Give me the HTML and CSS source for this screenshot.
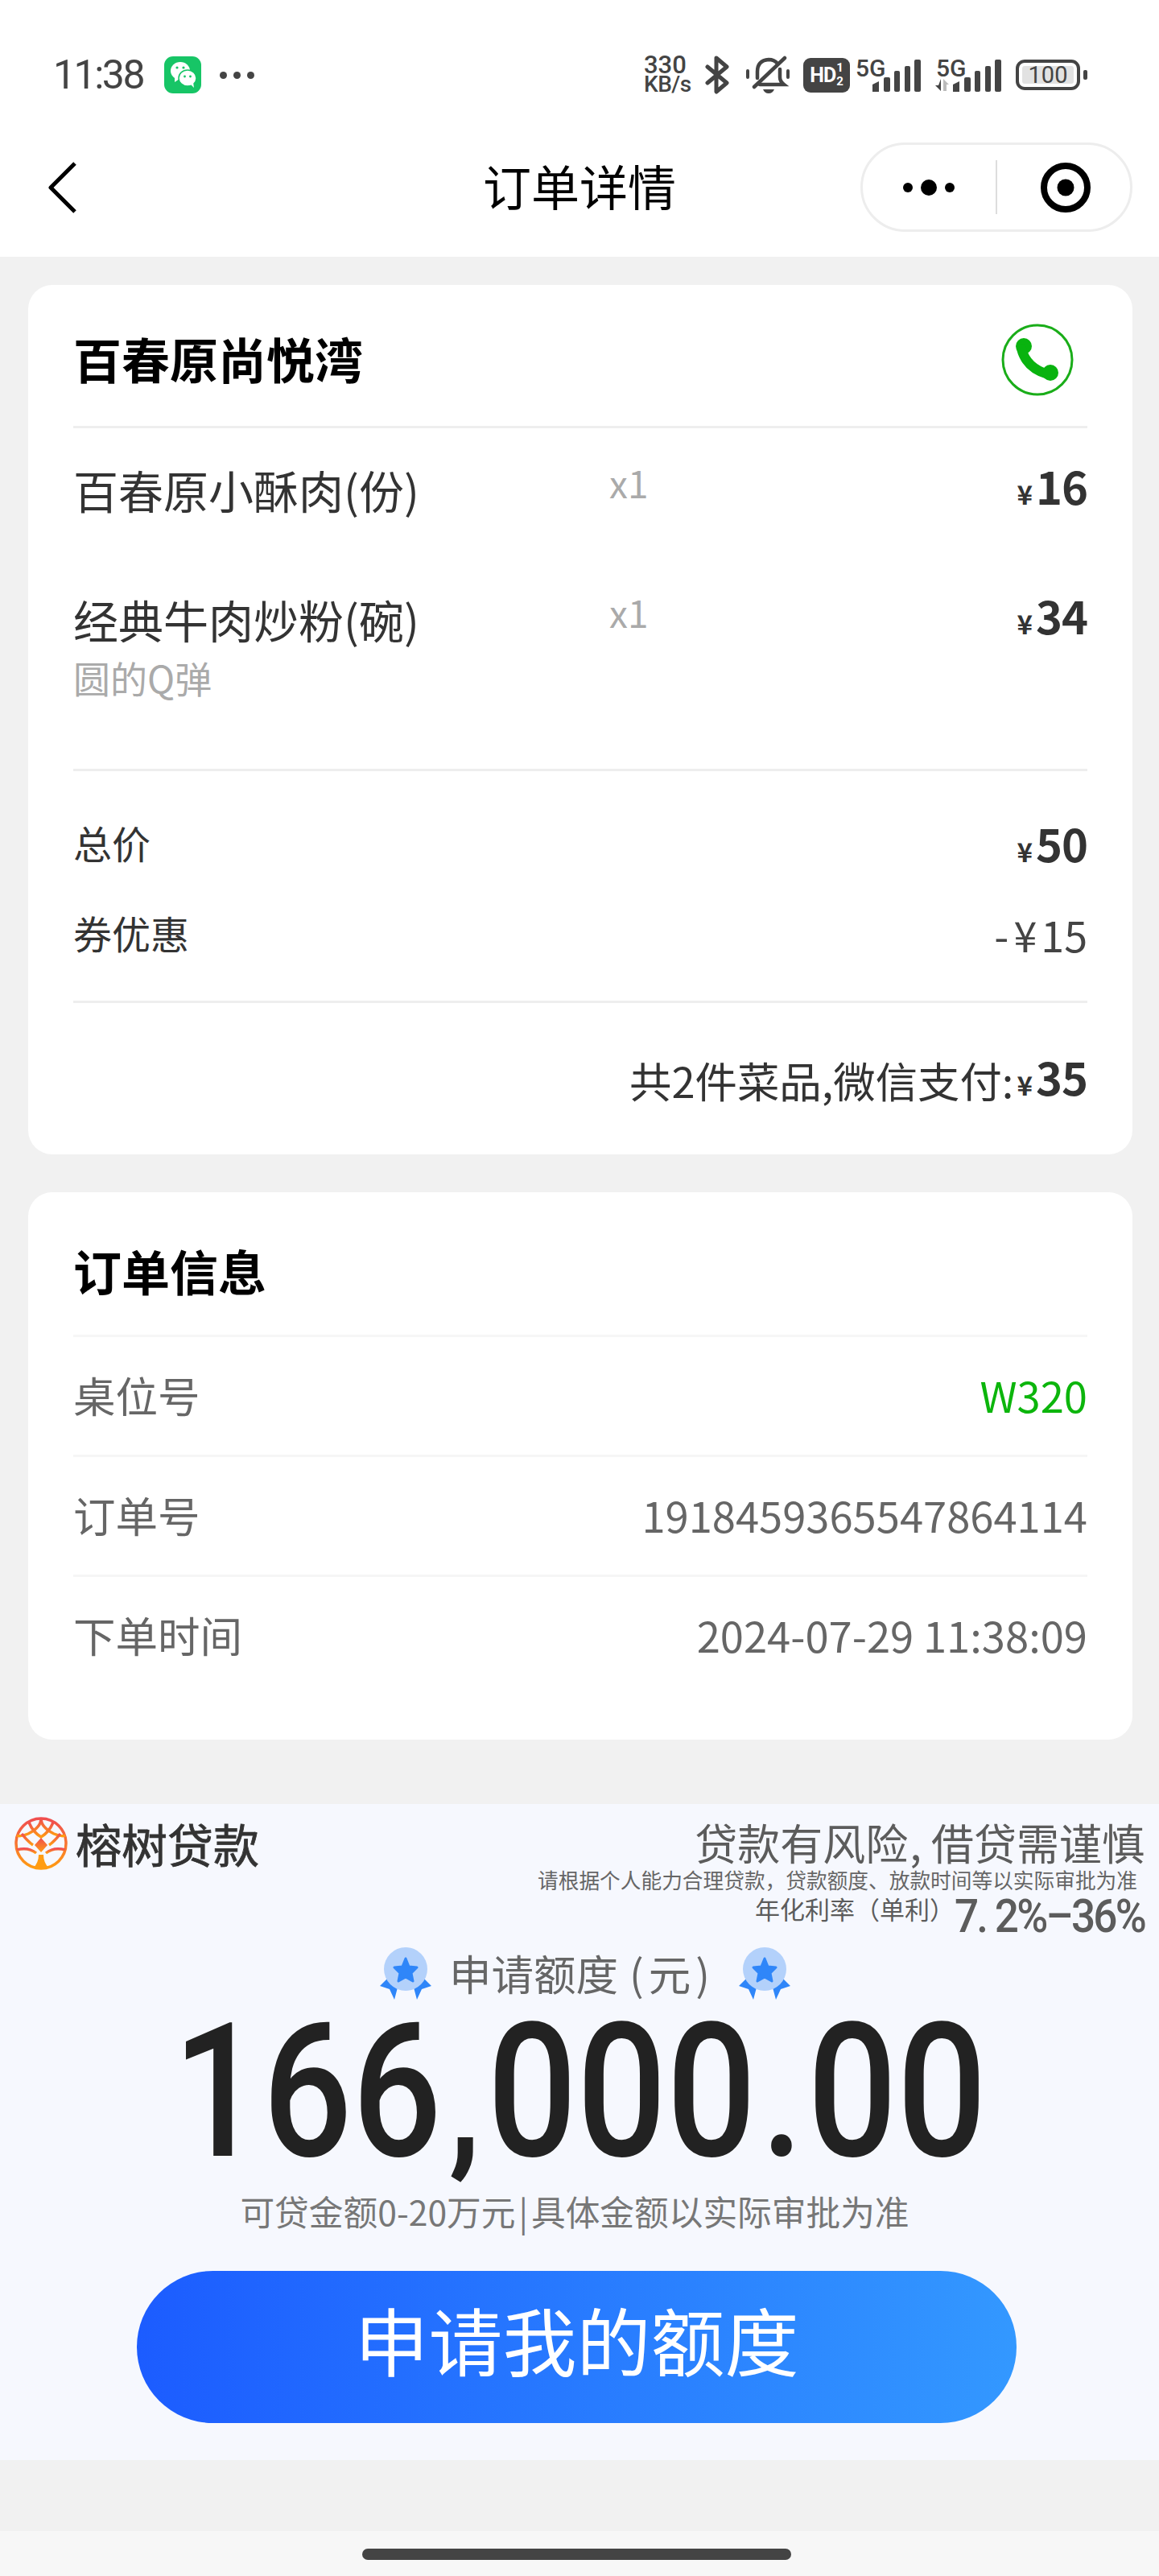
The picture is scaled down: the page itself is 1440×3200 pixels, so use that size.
FILE: index.html
```html
<!DOCTYPE html>
<html lang="zh-CN">
<head>
  <meta charset="UTF-8" />
  <title>订单详情</title>
  <link rel="stylesheet" href="styles.css">
</head>
<body>

  <!-- Status bar + nav -->
  <header class="top">
    <div class="statusbar">
      <div class="status-left">
        <span class="time">11:38</span>
        <svg class="wechat" width="46" height="46" viewBox="0 0 46 46">
          <rect width="46" height="46" rx="11" fill="#17c566"/>
          <ellipse cx="20" cy="18" rx="12" ry="11" fill="#fff"/>
          <polygon points="13,26 13,32 19,28" fill="#fff"/>
          <ellipse cx="29" cy="27" rx="11" ry="10" stroke="#17c566" stroke-width="1.5" fill="#fff"/>
          <polygon points="33,35 37,39 36,32" fill="#fff"/>
          <circle cx="16" cy="14" r="1.6" fill="#17c566"/>
          <circle cx="24" cy="14" r="1.6" fill="#17c566"/>
          <circle cx="25.500" cy="25" r="1.400" fill="#17c566"/>
          <circle cx="32.500" cy="25" r="1.400" fill="#17c566"/>
        </svg>
        <span class="more-dots"><i></i><i></i><i></i></span>
      </div>
      <div class="status-right">
        <div class="speed"><b>330</b><b class="speed-unit">KB/s</b></div>
        <svg class="st-bt" width="30" height="48" viewBox="0 0 30 48" fill="none" stroke="#444" stroke-width="5" stroke-linejoin="round" stroke-linecap="round">
          <path d="M3 14 L27 34 L14 45 V3 L27 14 L3 34"/>
        </svg>
        <svg class="st-bell" width="56" height="48" viewBox="0 0 56 48" fill="none" stroke="#444" stroke-width="4.500" stroke-linecap="round">
          <path d="M15 28 V20 Q15 6 29 5 Q36 5 40 10"/>
          <path d="M43 17 V27 Q43 32 48 36 H18"/>
          <path d="M11 39 L49 3"/>
          <path d="M22 42 H36 Q34 47 29 47 Q24 47 22 42Z" fill="#444" stroke="none"/>
          <rect x="1" y="17" width="4" height="12" fill="#444" stroke="none" rx="2"/>
          <rect x="51" y="17" width="4" height="12" fill="#444" stroke="none" rx="2"/>
        </svg>
        <div class="st-hd">
          <span class="hd-main">HD</span>
          <span class="hd-frac"><span>1</span><span>2</span></span>
        </div>
        <svg class="st-signal" width="81" height="50" viewBox="0 -6 81 50">
          <text x="0" y="24" class="sig-text">5G</text>
          <path d="M21 34 L29 30 V43 H21Z" fill="#444"/>
          <rect x="35" y="25" width="8" height="18" rx="2" fill="#444"/>
          <rect x="48" y="17" width="7" height="26" rx="2" fill="#444"/>
          <rect x="61" y="11" width="7" height="32" rx="2" fill="#444"/>
          <rect x="73" y="3" width="8" height="40" rx="2" fill="#444"/>
        </svg>
        <svg class="st-signal2" width="83" height="50" viewBox="0 -6 83 50">
          <text x="2" y="24" class="sig-text">5G</text>
          <path d="M8 27 V42 L1 35 H5Z" fill="#444"/>
          <path d="M11 42 V27 L18 34 H15 V42Z" fill="#bbb"/>
          <path d="M23 34 L31 30 V43 H23Z" fill="#444"/>
          <rect x="37" y="25" width="8" height="18" rx="2" fill="#444"/>
          <rect x="50" y="17" width="7" height="26" rx="2" fill="#444"/>
          <rect x="63" y="11" width="7" height="32" rx="2" fill="#444"/>
          <rect x="75" y="3" width="8" height="40" rx="2" fill="#444"/>
        </svg>
        <div class="st-battery">
          <div class="battery-body"><span class="battery-level">100</span></div>
          <i class="battery-nub"></i>
        </div>
      </div>
    </div>

    <nav class="navbar">
      <svg class="back" width="36" height="64" viewBox="0 0 36 64" fill="none" stroke="#000" stroke-width="5">
        <path d="M34 2 L4 32 L34 62" stroke-linejoin="round"/>
      </svg>
      <h1 class="nav-title">订单详情</h1>
      <div class="capsule">
        <div class="capsule-more"><i></i><i class="big"></i><i></i></div>
        <div class="capsule-line"></div>
        <div class="capsule-close">
          <svg width="62" height="62" viewBox="0 0 62 62">
            <circle cx="31" cy="31" r="27" fill="none" stroke="#000" stroke-width="8"/>
            <circle cx="31" cy="31" r="10.500" fill="#000"/>
          </svg>
        </div>
      </div>
    </nav>
  </header>

  <main class="page">
    <!-- Order card -->
    <section class="card">
      <div class="shop-head">
        <h2 class="card-title">百春原尚悦湾</h2>
        <svg class="phone" width="90" height="90" viewBox="0 0 90 90">
          <circle cx="45" cy="45" r="43" fill="none" stroke="#1aad19" stroke-width="3"/>
          <circle cx="28" cy="28" r="10" fill="#09b30f"/>
          <circle cx="61" cy="61" r="10" fill="#09b30f"/>
          <path d="M25 31 Q31 55 58 63" fill="none" stroke="#09b30f" stroke-width="12" stroke-linecap="round"/>
        </svg>
      </div>

      <div class="items">
        <div class="item">
          <div class="item-main"><div class="item-name">百春原小酥肉(份)</div></div>
          <div class="item-qty">x1</div>
          <div class="item-price"><small>¥</small>16</div>
        </div>
        <div class="item">
          <div class="item-main">
            <div class="item-name">经典牛肉炒粉(碗)</div>
            <div class="item-note">圆的Q弹</div>
          </div>
          <div class="item-qty">x1</div>
          <div class="item-price"><small>¥</small>34</div>
        </div>
      </div>

      <div class="totals">
        <div class="total-row">
          <span class="total-label">总价</span>
          <span class="item-price total-price"><small>¥</small>50</span>
        </div>
        <div class="total-row">
          <span class="total-label">券优惠</span>
          <span class="discount">-<span class="discount-yen">¥</span>15</span>
        </div>
      </div>

      <div class="pay-line">共2件菜品,微信支付:<span class="item-price pay-price"><small>¥</small>35</span></div>
    </section>

    <!-- Order info -->
    <section class="card card-info">
      <div class="info-head">
        <h2 class="card-title">订单信息</h2>
      </div>
      <div class="info-row"><span>桌位号</span><span class="green">W320</span></div>
      <div class="info-row"><span>订单号</span><span>1918459365547864114</span></div>
      <div class="info-row"><span>下单时间</span><span>2024-07-29 11:38:09</span></div>
    </section>
  </main>

  <!-- Loan ad -->
  <section class="ad">
    <div class="ad-top">
      <div class="ad-brand">
        <svg width="68" height="68" viewBox="0 0 68 68" fill="none">
          <defs>
            <linearGradient id="logoGrad" x1="0" y1="0" x2="0" y2="1">
              <stop offset="0" stop-color="#f04e50"/>
              <stop offset="1" stop-color="#ff9c12"/>
            </linearGradient>
          </defs>
          <g stroke="url(#logoGrad)" stroke-width="3.500">
            <circle cx="34" cy="34" r="31"/>
            <path d="M34 3 Q34 14 18 22 Q8 26 4 24"/>
            <path d="M34 3 Q34 14 50 22 Q60 26 64 24"/>
            <path d="M19 8 Q24 20 34 26 Q44 20 49 8"/>
            <path d="M4 42 Q18 38 28 46"/>
            <path d="M64 42 Q50 38 40 46"/>
            <path d="M10 22 Q18 32 24 36"/>
            <path d="M58 22 Q50 32 44 36"/>
          </g>
          <path d="M34 27 L42 36 L34 45 L26 36Z" fill="url(#logoGrad)"/>
          <path d="M31 48 H37 Q37 58 44 65 H24 Q31 58 31 48Z" fill="#ff9c12"/>
        </svg>
        <span class="brand-name">榕树贷款</span>
      </div>
      <div class="ad-legal">
        <div class="risk">贷款有风险<span class="risk-comma">,</span>借贷需谨慎</div>
        <div class="legal-note">请根据个人能力合理贷款，贷款额度、放款时间等以实际审批为准</div>
        <div class="rate"><span class="rate-label">年化利率（单利）</span><b>7. 2%–36%</b></div>
      </div>
    </div>

    <div class="apply-label">
      <svg class="medal-left" width="64" height="66" viewBox="0 0 64 66">
        <path d="M0 48 L12 36 L22 50 L18 65 L12 52Z" fill="#2f86f9"/>
        <path d="M64 48 L52 36 L42 50 L46 65 L52 52Z" fill="#2f86f9"/>
        <circle cx="32" cy="27" r="27" fill="#b3d1fb"/>
        <polygon points="32,14 36,24 46,25 39,32 41,42 32,37 23,42 25,32 18,25 28,24" fill="#2f86f9" stroke="#2f86f9" stroke-width="3" stroke-linejoin="round"/>
      </svg>
      <span class="apply-text">申请额度<span class="apply-unit">(元)</span></span>
      <svg class="medal-right" width="64" height="66" viewBox="0 0 64 66">
        <path d="M0 48 L12 36 L22 50 L18 65 L12 52Z" fill="#2f86f9"/>
        <path d="M64 48 L52 36 L42 50 L46 65 L52 52Z" fill="#2f86f9"/>
        <circle cx="32" cy="27" r="27" fill="#b3d1fb"/>
        <polygon points="32,14 36,24 46,25 39,32 41,42 32,37 23,42 25,32 18,25 28,24" fill="#2f86f9" stroke="#2f86f9" stroke-width="3" stroke-linejoin="round"/>
      </svg>
    </div>

    <div class="amount"><span class="amount-num">166<i>,</i>000<i>.</i>00</span></div>
    <div class="amount-note">可贷金额0-20万元<span class="note-bar">|</span>具体金额以实际审批为准</div>
    <button class="apply-btn"><span>申请我的额度</span></button>
  </section>

  <div class="gap"></div>
  <footer class="homebar"><i></i></footer>

</body>
</html>
```

FILE: styles.css
```css
/* Base */
* { box-sizing: border-box; }

body {
  margin: 0;
  width: 1440px;
  height: 3200px;
  overflow: hidden;
  background: #f1f1f1;
  font-family: "Noto Sans CJK SC", "Noto Sans", sans-serif;
  color: #333;
}

h1, h2 { margin: 0; font-weight: 400; }

/* Status bar */
.top { background: #fff; height: 319px; }

.statusbar {
  height: 166px;
  padding: 20px 89px 0 66px;
  display: flex;
  align-items: center;
  justify-content: space-between;
}

.status-left { display: flex; align-items: center; }

.time {
  font-family: Roboto, sans-serif;
  font-size: 50px;
  color: #444;
  letter-spacing: -2.500px;
  width: 138px;
}

.more-dots { display: flex; gap: 8px; margin-left: 23px; }
.more-dots i { width: 9px; height: 9px; border-radius: 50%; background: #444; }

.status-right { display: flex; align-items: center; }

.speed {
  width: 61px;
  display: flex;
  flex-direction: column;
  font-family: Roboto, sans-serif;
  color: #444;
  font-size: 31px;
  line-height: 24px;
}
.speed b { font-weight: 500; }
.speed-unit { font-size: 28px; letter-spacing: -.5px; white-space: nowrap; }

.st-bt { margin-left: 15px; }
.st-bell { margin-left: 20px; }

.st-hd {
  margin-left: 16px;
  width: 58px;
  height: 43px;
  border-radius: 9px;
  background: #444;
  color: #fff;
  display: flex;
  align-items: center;
  justify-content: center;
  font-family: Roboto, sans-serif;
  font-weight: 700;
}
.hd-main { font-size: 25px; letter-spacing: -1px; }
.hd-frac {
  display: flex;
  flex-direction: column;
  font-size: 15px;
  line-height: 17px;
  margin-left: 1px;
}

.st-signal { margin: -6px 0 0 7px; }
.st-signal2 { margin: -6px 0 0 17px; }
.sig-text {
  font-family: Roboto, sans-serif;
  font-size: 30px;
  font-weight: 500;
  fill: #444;
}

.st-battery { margin-left: 18px; display: flex; align-items: center; }
.battery-body {
  width: 80px;
  height: 38px;
  border: 4px solid #444;
  border-radius: 11px;
  padding: 4px;
  display: flex;
}
.battery-level {
  flex: 1;
  background: #e2e2e2;
  border-radius: 3px;
  font-family: Roboto, sans-serif;
  font-size: 29px;
  line-height: 22px;
  text-align: center;
  color: #444;
}
.battery-nub {
  width: 5px;
  height: 12px;
  margin-left: 4px;
  border-radius: 2px;
  background: #444;
}

/* Nav */
.navbar {
  height: 133px;
  padding: 0 33px;
  display: grid;
  grid-template-columns: minmax(0, 1fr) auto minmax(0, 1fr);
  align-items: center;
}
.back { display: block; margin-left: 26px; }
.nav-title { font-size: 60px; line-height: 80px; color: #000; padding-bottom: 6px; }

.capsule {
  justify-self: end;
  width: 338px;
  height: 111px;
  border: 3px solid #ededed;
  border-radius: 56px;
  display: flex;
  align-items: center;
}
.capsule-more {
  width: 165px;
  display: flex;
  align-items: center;
  justify-content: center;
  gap: 10px;
  padding-right: 2px;
}
.capsule-more i { width: 12px; height: 12px; border-radius: 50%; background: #000; }
.capsule-more i.big { width: 20px; height: 20px; }
.capsule-line { width: 2px; height: 67px; background: #ddd; }
.capsule-close { flex: 1; display: flex; justify-content: center; padding-left: 4px; }
.capsule-close svg { display: block; }

/* Cards */
.page { padding: 35px 33px 0 35px; }

.card {
  background: #fff;
  border-radius: 30px;
  padding: 0 56px;
  height: 1080px;
}

.card-title { font-size: 60px; font-weight: 700; color: #000; line-height: 80px; }

.shop-head {
  padding: 48px 17px 37px 0;
  display: flex;
  align-items: center;
  justify-content: space-between;
  border-bottom: 3px solid #eee;
}
.shop-head .card-title { padding-bottom: 4px; }
.phone { display: block; }

.items { padding: 36px 0 84px; border-bottom: 3px solid #eee; }
.item { display: flex; align-items: flex-start; }
.item + .item { margin-top: 81px; }
.item-main { width: 666px; }
.item-name { font-size: 56px; line-height: 80px; color: #333; }
.item-note { font-size: 46px; line-height: 60px; margin-top: 2px; color: #aaa; }
.item-qty { flex: 1; font-size: 46px; line-height: 62px; color: #aaa; }
.item-price {
  font-size: 56px;
  line-height: 70px;
  font-weight: 700;
  color: #333;
  letter-spacing: -1px;
}
.item-price small { font-size: 33px; margin-right: 5px; }

.totals { padding: 34px 0 27px; border-bottom: 3px solid #eee; }
.total-row {
  height: 112px;
  display: flex;
  align-items: center;
  justify-content: space-between;
}
.total-label { font-size: 48px; padding-bottom: 4px; }
.total-price { padding-top: 8px; }
.discount { font-size: 52px; color: #444; }
.discount-yen { margin: 0 5px 0 6px; }

.pay-line {
  height: 186px;
  padding-top: 4px;
  display: flex;
  align-items: center;
  justify-content: flex-end;
  font-size: 52.400px;
}
.pay-price { margin-left: 4px; padding-top: 2px; }

.card-info { margin-top: 47px; height: 680px; }
.info-head { height: 177px; padding-top: 57px; }
.info-row {
  height: 149px;
  border-top: 3px solid #f6f6f6;
  padding-bottom: 4px;
  display: flex;
  align-items: center;
  justify-content: space-between;
  font-size: 52.500px;
  color: #666;
}
.green { color: #0cb50c; }

/* Loan ad */
.ad {
  margin-top: 80px;
  height: 815px;
  background: #f6f8fe;
  padding: 19px 18px 0;
}

.ad-top { display: flex; justify-content: space-between; align-items: flex-start; }
.ad-brand { display: flex; align-items: center; margin: -5px 0 0 -1px; }
.brand-name {
  font-size: 57px;
  color: #333;
  -webkit-text-stroke: .8px #333;
  margin-left: 9px;
  line-height: 68px;
  padding-bottom: 2px;
}

.ad-legal { text-align: right; color: #5c5c5c; }
.risk { font-size: 53px; line-height: 56px; }
.risk-comma { margin: 0 12px 0 2px; }
.legal-note { font-size: 25.700px; line-height: 26px; margin-top: 6px; padding-right: 9px; color: #666; }
.rate {
  height: 54px;
  padding-top: 9px;
  line-height: 36px;
  white-space: nowrap;
  display: flex;
  justify-content: flex-end;
  align-items: center;
}
.rate-label { font-size: 31px; padding-bottom: 17px; }
.rate b {
  font-family: Roboto, sans-serif;
  font-size: 58px;
  font-weight: 500;
  letter-spacing: -3px;
  display: inline-block;
  transform: scaleX(.915);
  transform-origin: right center;
  margin-left: -22px;
}

.apply-label {
  margin-top: 15px;
  display: flex;
  align-items: center;
  justify-content: center;
  gap: 26px;
  padding-left: 14px;
}
.medal-left { margin-right: -4px; }
.medal-right { margin-left: 4px; }
.apply-text { font-size: 52.500px; line-height: 66px; color: #666; padding-bottom: 3px; }
.apply-unit { margin-left: 14px; letter-spacing: 6px; }

.amount {
  height: 190px;
  margin-top: 18px;
  display: flex;
  justify-content: center;
  color: #222;
  line-height: 190px;
}
.amount-num {
  font-family: Roboto, sans-serif;
  font-size: 232px;
  font-weight: 500;
  display: inline-block;
  transform: scaleX(.845);
  white-space: nowrap;
}
.amount-num i { font-style: normal; font-size: 190px; font-weight: 700; margin: 0 10px; }

.amount-note {
  margin-top: 22px;
  padding-right: 12px;
  text-align: center;
  font-size: 42.700px;
  line-height: 60px;
  color: #777;
}
.note-bar { margin: 0 4px; }

.apply-btn {
  display: block;
  width: 1093px;
  height: 189px;
  margin: 45px 0 0 152px;
  border: none;
  border-radius: 95px;
  background: linear-gradient(90deg, #1c5cff, #3398ff);
  color: #fff;
  font-family: inherit;
  font-size: 92px;
  padding: 0 0 22px;
}

/* Bottom */
.gap { height: 88px; }
.homebar {
  height: 56px;
  background: #f7f7f7;
  padding-top: 22px;
  display: flex;
  justify-content: center;
  align-items: flex-start;
}
.homebar i {
  width: 533px;
  height: 14px;
  border-radius: 7px;
  background: #444;
  margin-left: -7px;
}
```
